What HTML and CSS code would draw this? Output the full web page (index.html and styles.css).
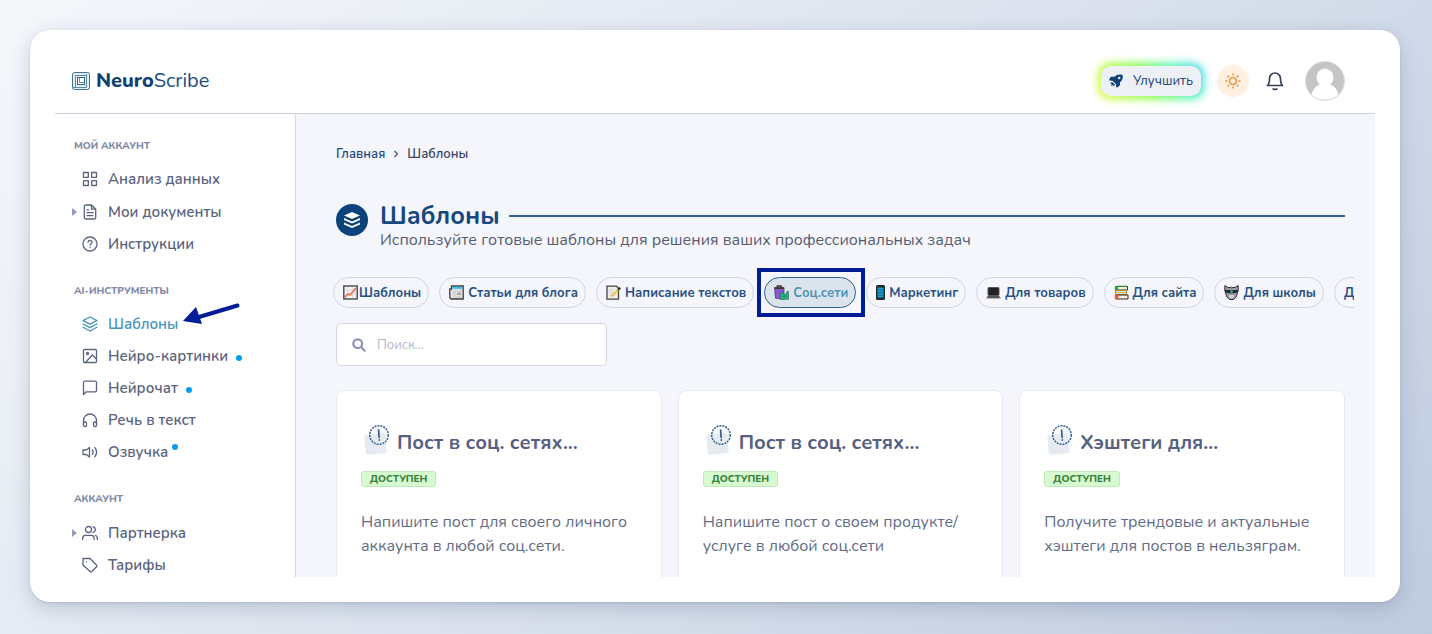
FILE: index.html
```html
<!DOCTYPE html>
<html lang="ru">
<head>
<meta charset="utf-8">
<title>NeuroScribe — Шаблоны</title>
<link rel="stylesheet" href="styles.css">
</head>
<body>
<svg class="defs" aria-hidden="true">
  <symbol id="card-icon" viewBox="0 0 28 32">
    <rect x="2" y="10" width="21" height="20" rx="2" fill="#e6ebf2" transform="rotate(-5 12 20)"/>
    <circle cx="16" cy="11" r="9.300" fill="#e6ebf2" fill-opacity=".35" stroke="#34618f" stroke-width="1.500" stroke-dasharray="2 1"/>
    <path d="M15.600 6l.5 7.500" stroke="#34618f" stroke-width="1.700" stroke-linecap="round"/>
    <circle cx="16.300" cy="16" r=".9" fill="#34618f"/>
  </symbol>
</svg>
<div class="window">
  <header class="topbar">
    <a class="brand" href="#">
      <svg class="brand-mark" viewBox="0 0 18 18" fill="none" stroke="#5c8aa8" stroke-width="1">
        <rect x=".5" y=".5" width="17" height="17" rx="2" fill="#e3edf2" stroke="#3f7396"/>
        <path d="M3.500 15.500V3.500H14.500M1 15.500h13.500V2"/>
        <rect x="5.500" y="5.500" width="7" height="7" fill="#fff" stroke="#2f678f"/>
        <path d="M7.500 5.500v5h5"/>
      </svg>
      <span><b>Neuro</b>Scribe</span>
    </a>
    <div class="actions">
      <button class="upgrade" type="button">
        <svg viewBox="0 0 16 16" fill="#0f4275"><path d="M15.500 1C11.500-.1 8.500.9 6.500 3.100L3 3.200C2.300 3.200 1.800 3.500 1.400 4.100L.2 6.500c-.2.500 0 .9.500.9l3.300.2 4 4 .2 3.300c0 .5.500.7.900.5l2.600-1.700c.5-.3.800-.8.800-1.400l.1-2.800C14.900 7.500 16.300 4.800 15.500 1zM11.600 6a1.400 1.400 0 1 1 0-2.800 1.400 1.400 0 0 1 0 2.800zM3.300 8.800L1 11l2.200-.2L2.300 13.700 5.200 12.700 5 14.500l2-2.200z"/></svg>
        <span>Улучшить</span>
      </button>
      <button class="theme" type="button" aria-label="Тема">
        <svg viewBox="0 0 18 18" fill="none" stroke="#ef8a33" stroke-width="1.600" stroke-linecap="round"><circle cx="9" cy="9" r="3.800"/><path d="M9 1v1.200M9 15.800V17M1 9h1.200M15.800 9H17M3.300 3.300l.9.900M13.800 13.800l.9.900M14.700 3.300l-.9.900M4.200 13.800l-.9.900"/></svg>
      </button>
      <button class="bell" type="button" aria-label="Уведомления">
        <svg viewBox="0 0 18 20" fill="none" stroke="#34405a" stroke-width="1.700" stroke-linecap="round" stroke-linejoin="round"><path d="M1.500 14.500h15c-1.800-1.500-2-3-2-7a5.500 5.500 0 0 0-11 0c0 4-.2 5.500-2 7z"/><path d="M7.200 18q1.800 1 3.600 0"/></svg>
      </button>
      <button class="avatar" type="button" aria-label="Профиль">
        <svg viewBox="0 0 40 40"><circle cx="20" cy="20" r="19.500" fill="#c5c5c5"/><path d="M16.500 23h7c5 1 8.500 5 10 10.500a19.500 19.500 0 0 1-27 0C8 28 11.500 24 16.500 23z" fill="#fff"/><ellipse cx="20" cy="16.500" rx="8.500" ry="9" fill="#fff"/><circle cx="20" cy="20" r="19.500" fill="none" stroke="#dcdde3"/></svg>
      </button>
    </div>
  </header>
  <div class="body">
    <nav class="sidebar">
      <section>
        <h2>МОЙ АККАУНТ</h2>
        <a class="item" href="#"><svg viewBox="0 0 16 16"><rect x="1.500" y="1.500" width="4.800" height="4.800"/><rect x="9.700" y="1.500" width="4.800" height="4.800"/><rect x="1.500" y="9.700" width="4.800" height="4.800"/><rect x="9.700" y="9.700" width="4.800" height="4.800"/></svg><span>Анализ данных</span></a>
        <a class="item parent" href="#"><svg viewBox="0 0 16 16"><path d="M9.500 1H3.700C2.900 1 2.300 1.600 2.300 2.400v11.200c0 .8.600 1.400 1.400 1.400h8.600c.8 0 1.400-.6 1.400-1.400V5.200zM9.500 1v4.200h4.200M5 8.700h6M5 11.700h6M5 5.800h1.500"/></svg><span>Мои документы</span></a>
        <a class="item" href="#"><svg viewBox="0 0 16 16"><circle cx="8" cy="8" r="7"/><path d="M6 6.300c.2-2.600 4.200-2.300 4 0C9.900 7.700 8 7.700 8 9.200M8 11.500v.1"/></svg><span>Инструкции</span></a>
      </section>
      <section>
        <h2>AI-ИНСТРУМЕНТЫ</h2>
        <a class="item current" href="#"><svg viewBox="0 0 16 16"><path d="M8 1l7 3.600-7 3.600-7-3.600zM1 8l7 3.600L15 8M1 11.300L8 15l7-3.700"/></svg><span>Шаблоны</span>
          <svg class="pointer" viewBox="0 0 58 24"><path d="M54.500 3.500L16 15" stroke="#001c96" stroke-width="4" stroke-linecap="round" fill="none"/><path d="M0 19L13 5l6 17z" fill="#001c96"/></svg></a>
        <a class="item" href="#"><svg viewBox="0 0 16 16"><rect x="1.500" y="1.500" width="13" height="13" rx="1"/><circle cx="5.500" cy="5.500" r="1"/><path d="M3.500 14.500l6.800-7.500 4.200 4"/></svg><span>Нейро-картинки</span><i class="dot wide"></i></a>
        <a class="item" href="#"><svg viewBox="0 0 16 16"><path d="M14.500 10.500c0 .7-.6 1.300-1.300 1.300H4.300L1.500 14.500v-12c0-.7.600-1.300 1.300-1.300h10.400c.7 0 1.300.6 1.300 1.300z"/></svg><span>Нейрочат</span><i class="dot wide"></i></a>
        <a class="item" href="#"><svg viewBox="0 0 16 16"><path d="M1.500 12V8.500a6.500 6.500 0 0 1 13 0V12"/><path d="M1.500 10h1.800c.7 0 1.200.5 1.200 1.200v2.100c0 .7-.5 1.200-1.200 1.200h-.6c-.7 0-1.200-.5-1.200-1.200zM14.500 10h-1.800c-.7 0-1.200.5-1.200 1.200v2.100c0 .7.500 1.200 1.200 1.200h.6c.7 0 1.200-.5 1.200-1.200z"/></svg><span>Речь в текст</span></a>
        <a class="item" href="#"><svg viewBox="0 0 16 16"><path d="M7.500 3.500L4.300 6H1v4.500h3.300L7.500 13zM10.300 6q1.600 2.200 0 4.500M12.800 3.700q3.600 4.500 0 9"/></svg><span>Озвучка</span><i class="dot raised"></i></a>
      </section>
      <section>
        <h2>АККАУНТ</h2>
        <a class="item parent" href="#"><svg viewBox="0 0 16 16"><circle cx="6.500" cy="4.500" r="3"/><path d="M.7 14.500V13c0-1.700 1.300-2.700 2.800-2.700h5.800c1.600 0 2.800 1.100 2.800 2.700v1.500M11 1.600c3 .8 3 5 0 5.800M15.300 14.500V13c0-1.300-.7-2.200-1.800-2.600"/></svg><span>Партнерка</span></a>
        <a class="item" href="#"><svg viewBox="0 0 16 16"><path d="M1 1.500h7l6.500 6.500c.6.500.6 1.200 0 1.800L9.800 14.500c-.5.500-1.300.5-1.800 0L1 8zM4.500 5v.1"/></svg><span>Тарифы</span></a>
      </section>
    </nav>
    <main class="content">
      <nav class="crumbs"><a href="#">Главная</a><svg viewBox="0 0 6 8"><path d="M1.500 1l3 3-3 3" fill="none" stroke="#4d5875" stroke-width="1.300"/></svg><span>Шаблоны</span></nav>
      <div class="heading">
        <svg class="heading-icon" viewBox="0 0 32 32"><circle cx="16" cy="16" r="16" fill="#0c427a"/><path d="M16 8l8 3.500-8 3.500-8-3.500zM8 14l8 3.500 8-3.500v2l-8 3.500-8-3.500zM8 18.500l8 3.500 8-3.500v2L16 24l-8-3.500z" fill="#fff"/></svg>
        <div class="heading-text">
          <div class="title-row"><h1>Шаблоны</h1><span class="rule"></span></div>
          <p>Используйте готовые шаблоны для решения ваших профессиональных задач</p>
        </div>
      </div>
      <div class="chips">
        <button class="chip tight" type="button"><svg viewBox="0 0 15 15"><rect x=".8" y="1" width="13.400" height="13" fill="#f4f3f2" stroke="#393c3f" stroke-width="1.300"/><path d="M5 2v11M9.500 2v11M2 5h11M2 9.500h11" stroke="#ddd"/><path d="M1.500 12.500L5 9l2 1 6-7" fill="none" stroke="#ed694f" stroke-width="1.500"/></svg>Шаблоны</button>
        <button class="chip" type="button"><svg viewBox="0 0 15 15"><path d="M2.500 1h11.700v13H2L.8 12.500V4H2.500z" fill="#e4e3e3" stroke="#3d3d3d" stroke-width="1.300"/><path d="M3.500 1.800h9.800v2H3.500z" fill="#2fc1ed"/><path d="M4 6h8.500M4 8h3M4 10h3M4 12h8.500" stroke="#c2c2c2" stroke-width=".8"/><path d="M8 7.500h4v2.500H8z" fill="#a8a8a8"/></svg>Статьи для блога</button>
        <button class="chip" type="button"><svg viewBox="0 0 15 15"><path d="M1 1.200h9.500l2 2v11H1z" fill="#f2f0ea" stroke="#444" stroke-width="1.300"/><path d="M3 5h5M3 7.500h4M3 10h3" stroke="#ccc"/><path d="M5.500 11.500l7-7" stroke="#efbd4b" stroke-width="2.200"/><path d="M12 5l2.300-2.300" stroke="#333" stroke-width="2.200"/></svg>Написание текстов</button>
        <span class="spotlight"><button class="chip selected" type="button"><svg viewBox="0 0 15 15"><path d="M.5 2.500h9.500v11.800l-8.500-1z" fill="#8859ce" stroke="#3c345d" stroke-width=".7"/><path d="M.8 3.200h9M3.200 3V1h4v2" fill="none" stroke="#453333" stroke-width="1.400"/><path d="M6.500 8l2-.5L10 9.500l2-.5 1-2.500h1.500v7.800H6.500z" fill="#27b58b" stroke="#27634e" stroke-width=".6"/><path d="M8.500 11q2 2 4-.5" stroke="#126b51" fill="none" stroke-width=".8"/></svg>Соц.сети</button></span>
        <button class="chip" type="button"><svg class="slim" viewBox="0 0 9 15"><rect width="9" height="15" rx="1.500" fill="#25282b"/><path d="M1.500 2.500h6v10h-6z" fill="#159fd5"/><path d="M1.500 5h6M1.500 7.500h6M1.500 10h6" stroke="#1b5875" stroke-width=".8"/></svg>Маркетинг</button>
        <button class="chip" type="button"><svg viewBox="0 0 15 15"><rect x="2" y="2.500" width="11" height="8" rx="1" fill="#202226" stroke="#555"/><path d="M1.500 11h12l1.500 2.500H0z" fill="#777"/><path d="M2 12h11" stroke="#333"/></svg>Для товаров</button>
        <button class="chip" type="button"><svg viewBox="0 0 15 15"><path d="M3 1.500h10.500v3.500H3z" fill="#faf1da" stroke="#26322a"/><path d="M.8 1h3v4.500h-3z" fill="#2aa44b"/><path d="M3 1.300h10" stroke="#2a8f45" stroke-width="1.200"/><path d="M1.500 5.500h11v4h-11z" fill="#cfeaf3" stroke="#b98a20"/><path d="M2 7.500h10" stroke="#efb43b"/><path d="M2.500 10h11.500v4H2.500z" fill="#f5eee5" stroke="#2f2725"/><path d="M.8 9.800h3.500v4.500H.8z" fill="#f4582c"/></svg>Для сайта</button>
        <button class="chip" type="button"><svg viewBox="0 0 15 15"><path d="M.8.5L4 2.500h7L14.200.5v5l-2 6.500-2.700 2.500h-4L2.800 12 .8 5.500z" fill="#9b9da0" stroke="#303236"/><path d="M1 5h13v2.200l-4 1H5l-4-1z" fill="#25282d"/><circle cx="7.500" cy="6.500" r="1.300" fill="#28b2cc"/><path d="M7.500 1.500V4" stroke="#e65439" stroke-width="1.400"/><path d="M5 10h5v2l-2.500 1.500L5 12z" fill="#d0d0d0"/></svg>Для школы</button>
        <button class="chip" type="button">Другое</button>
      </div>
      <label class="search">
        <svg viewBox="0 0 14 14" fill="none" stroke="#8b94b1" stroke-width="2.200" stroke-linecap="round"><circle cx="5.700" cy="5.700" r="4.400"/><path d="M9.300 9.300l3.400 3.400"/></svg>
        <input type="text" placeholder="Поиск..." aria-label="Поиск">
      </label>
      <div class="cards">
        <article class="card"><h3><svg><use href="#card-icon"/></svg><span>Пост в соц. сетях...</span></h3><span class="badge">ДОСТУПЕН</span><p>Напишите пост для своего личного аккаунта в любой соц.сети.</p></article>
        <article class="card"><h3><svg><use href="#card-icon"/></svg><span>Пост в соц. сетях...</span></h3><span class="badge">ДОСТУПЕН</span><p>Напишите пост о своем продукте/<wbr>услуге в любой соц.сети</p></article>
        <article class="card"><h3><svg><use href="#card-icon"/></svg><span>Хэштеги для...</span></h3><span class="badge">ДОСТУПЕН</span><p>Получите трендовые и актуальные хэштеги для постов в нельзяграм.</p></article>
      </div>
    </main>
  </div>
</div>
</body>
</html>
```
FILE: styles.css
```css
* { box-sizing: border-box; }
body {
  margin: 0;
  height: 100vh;
  padding: 30px 32px 32px 30px;
  background: linear-gradient(135deg, #f5f7fb 0%, #dde4ef 48%, #bfcbdf 100%);
  font-family: Nunito, Lato, "Noto Sans", sans-serif;
  font-size: 16px;
  color: #5a6380;
  overflow: hidden;
}
h1, h2, h3, p { margin: 0; }
a { color: inherit; text-decoration: none; }
button, input { font: inherit; color: inherit; }
button { border: 0; padding: 0; background: none; }
svg { display: block; flex: none; }
.defs { position: absolute; width: 0; height: 0; }

.window {
  height: 100%;
  display: flex;
  flex-direction: column;
  padding: 0 25px 25px;
  border-radius: 20px;
  background: #fff;
  box-shadow: 0 1px 2px #8090ab55, 0 6px 20px #6c7c9955;
}
.topbar {
  position: relative;
  z-index: 0;
  flex: none;
  display: flex;
  align-items: center;
  justify-content: space-between;
  height: 84px;
  padding: 18px 30px 0 17px;
  border-bottom: 1px solid #cdd0df;
}
.brand { display: flex; align-items: center; gap: 6px; font-size: 20px; color: #1d4c83; }
.brand b { font-weight: 800; color: #0f4275; }
.brand-mark { width: 18px; height: 18px; }
.actions { display: flex; align-items: center; }
.upgrade {
  position: relative;
  display: flex;
  align-items: center;
  gap: 10px;
  height: 30px;
  padding: 0 8px;
  border-radius: 10px;
  background: #edf1f6;
  font-size: 13px;
  font-weight: 500;
  color: #2f4d7d;
}
.upgrade::before {
  content: "";
  position: absolute;
  inset: -3px;
  z-index: -1;
  border-radius: 12px;
  background: linear-gradient(60deg, #e8f53c, #7dff3f 45%, #48f5b8 75%, #45cdf5);
  filter: blur(4px);
}
.upgrade svg { width: 14px; height: 14px; }
.theme { margin-left: 16px; padding: 8px; border-radius: 50%; background: #fff0df; }
.theme svg { width: 16px; height: 16px; }
.bell { margin-left: 17px; }
.bell svg { width: 18px; height: 20px; }
.avatar { margin-left: 21px; }
.avatar svg { width: 40px; height: 40px; }

.body { flex: 1; min-height: 0; display: flex; overflow: hidden; }
.sidebar {
  flex: none;
  width: 241px;
  display: flex;
  flex-direction: column;
  gap: 22px;
  padding: 23px 0 0 17px;
  border-right: 1px solid #d3d6e4;
}
.sidebar h2 {
  margin: 0 0 8px;
  padding-left: 2px;
  font-size: 10px;
  line-height: 18px;
  font-weight: 800;
  color: #7f89a8;
}
.item {
  position: relative;
  display: flex;
  align-items: center;
  gap: 10px;
  height: 32px;
  padding-left: 10px;
  font-size: 15px;
  font-weight: 600;
}
.item > svg:first-child {
  width: 16px;
  height: 16px;
  fill: none;
  stroke: currentColor;
  stroke-width: 1.300;
  stroke-linecap: round;
  stroke-linejoin: round;
}
.item.parent { height: 33px; }
.parent::before {
  content: "";
  position: absolute;
  left: 0;
  border: 4px solid transparent;
  border-left: 5px solid #929bb8;
  border-right: 0;
}
.current { color: #4794bc; }
.pointer { position: absolute; left: 111px; bottom: 14px; width: 58px; height: 24px; }
.dot { width: 6px; height: 6px; border-radius: 50%; background: #079bf0; }
.dot.wide { margin: 4px 0 0 -2px; }
.dot.raised { margin: -10px 0 0 -6px; }

.content {
  flex: 1;
  min-width: 0;
  padding: 30px 30px 0 40px;
  background: #f5f6fb;
}
.crumbs {
  display: flex;
  align-items: center;
  gap: 8px;
  font-size: 13px;
  line-height: 20px;
  font-weight: 600;
  color: #3a4463;
}
.crumbs a { color: #1d4c83; }
.crumbs svg { width: 6px; height: 8px; }
.heading { display: flex; gap: 12px; margin-top: 38px; }
.heading-icon { width: 32px; height: 32px; margin-top: 2px; }
.heading-text { flex: 1; }
.title-row { display: flex; align-items: center; gap: 9px; }
h1 { font-size: 25px; line-height: 28px; font-weight: 700; color: #154780; }
.rule { flex: 1; height: 2px; background: #33608e; }
.heading p { font-size: 16px; line-height: 20px; color: #555c70; }

.chips { display: flex; gap: 10px; margin: 18px -9px 0 -3px; padding: 9px 0; overflow: hidden; }
.chip {
  flex: none;
  display: flex;
  align-items: center;
  gap: 4px;
  height: 31px;
  padding: 0 7px 0 9px;
  border: 1px solid #d2d4e5;
  border-radius: 16px;
  font-size: 13px;
  line-height: 18px;
  font-weight: 700;
  white-space: nowrap;
  color: #295084;
}
.chip svg { width: 15px; height: 15px; }
.chip .slim { width: 9px; }
.chip.tight { gap: 1px; }
.chip.selected { border-color: #2d5f8f; background: #dbe4ec; color: #4e93b8; }
.spotlight { position: relative; flex: none; }
.spotlight::after {
  content: "";
  position: absolute;
  inset: -9px -9px -9px -7px;
  border: 4px solid #001c96;
}
.search {
  display: flex;
  align-items: center;
  gap: 11px;
  width: 271px;
  height: 43px;
  margin-top: 6px;
  padding: 0 15px;
  border: 1px solid #d3d7e5;
  border-radius: 5px;
  background: #fff;
}
.search svg { width: 14px; height: 14px; }
.search input { flex: 1; min-width: 0; border: 0; padding: 0; outline: 0; background: none; font-size: 13px; }
.search input::placeholder { color: #b0b6ca; }
.cards { display: grid; grid-template-columns: repeat(3, minmax(0, 1fr)); gap: 16px; margin-top: 24px; }
.card {
  min-height: 260px;
  padding: 33px 24px;
  border: 1px solid #e7e9f3;
  border-radius: 8px;
  background: #fff;
}
.card h3 { display: flex; gap: 6px; font-size: 20px; line-height: 38px; font-weight: 700; color: #566080; }
.card h3 svg { width: 28px; height: 32px; margin-left: 2px; }
.badge {
  display: block;
  width: max-content;
  margin-top: 9px;
  padding: 0 8px;
  border: 1px solid #bdeab6;
  border-radius: 3px;
  background: #d7fad0;
  font-size: 10px;
  line-height: 14px;
  font-weight: 800;
  color: #37813a;
}
.card p { margin-top: 23px; font-size: 16px; line-height: 24px; color: #626b84; }
```
